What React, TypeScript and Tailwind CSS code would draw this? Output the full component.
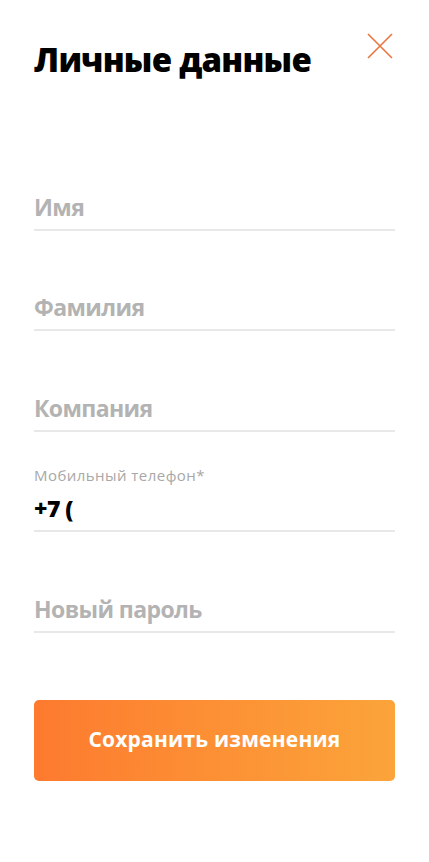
export default function App() {
  const fields = ["Имя", "Фамилия", "Компания"];

  return (
    <div className="min-h-screen bg-white px-[34px] pt-[40px] font-['Open_Sans',sans-serif]">
      {/* header */}
      <div className="flex items-start justify-between">
        <h1 className="text-[33px] font-extrabold leading-[40px] tracking-[-0.75px] text-black">
          Личные данные
        </h1>
        <button className="mr-[2px] mt-[-7px] text-[#e8753f]" aria-label="Закрыть">
          <svg width="26" height="26" viewBox="0 0 26 26" fill="none" stroke="currentColor" strokeWidth="1.6">
            <path d="M1 1 L25 25 M25 1 L1 25" />
          </svg>
        </button>
      </div>

      <form className="mt-[50px]">
        {fields.map((f) => (
          <div key={f} className="flex h-[100.5px] flex-col justify-end border-b-2 border-[#e8e8e8] pb-[7px]">
            <input
              placeholder={f}
              className="w-full bg-transparent text-[23px] font-bold leading-[30px] tracking-[-0.6px] text-black outline-none placeholder:text-[#b3b3b3]"
            />
          </div>
        ))}

        <div className="flex h-[100.5px] flex-col justify-end border-b-2 border-[#e8e8e8] pb-[7px]">
          <label className="text-[15px] leading-[20px] tracking-[0.45px] text-[#a8a8a8]">Мобильный телефон*</label>
          <input
            defaultValue="+7 ("
            className="mt-[8px] w-full bg-transparent text-[23px] font-extrabold leading-[30px] tracking-[-0.6px] text-black outline-none"
          />
        </div>

        <div className="flex h-[100.5px] flex-col justify-end border-b-2 border-[#e8e8e8] pb-[7px]">
          <input
            type="password"
            placeholder="Новый пароль"
            className="w-full bg-transparent text-[23px] font-bold leading-[30px] tracking-[-0.6px] text-black outline-none placeholder:text-[#b3b3b3]"
          />
        </div>

        <button
          type="button"
          className="mt-[67px] flex h-[81px] w-full items-center justify-center rounded-[5px] bg-gradient-to-r from-[#fd7a2f] to-[#fba43a] text-[21px] font-bold tracking-[0.2px] text-white"
        >
          Сохранить изменения
        </button>
      </form>
    </div>
  );
}
